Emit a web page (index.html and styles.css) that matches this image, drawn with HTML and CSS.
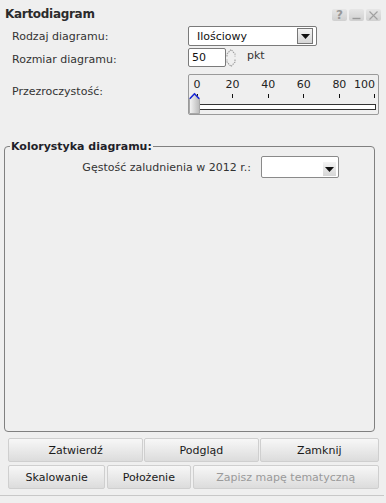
FILE: index.html
```html
<!DOCTYPE html>
<html lang="pl">
<head>
<meta charset="utf-8">
<link rel="stylesheet" href="styles.css">
</head>
<body>
<div class="panel">
  <div class="header">
    <div class="title">Kartodiagram</div>
    <div class="wbtns">
      <span class="wbtn q">?</span>
      <span class="wbtn">
        <svg width="9" height="9" viewBox="0 0 9 9"><path d="M0.5 7.5H8.5" stroke="#9a9a9a" stroke-width="1.4" fill="none"/></svg>
      </span>
      <span class="wbtn">
        <svg width="9" height="9" viewBox="0 0 9 9"><path d="M0.5 0.5L8.5 8.5M8.5 0.5L0.5 8.5" stroke="#a0a0a0" stroke-width="1.1" fill="none"/></svg>
      </span>
    </div>
  </div>

  <div class="form">
    <div class="label r1">Rodzaj diagramu:</div>
    <div class="select big">
      <span class="sel-text">Ilościowy</span>
      <span class="arrow-box boxed"><svg width="9" height="5" viewBox="0 0 9 5"><path d="M0 0H9L4.5 5Z" fill="#111"/></svg></span>
    </div>

    <div class="label r2">Rozmiar diagramu:</div>
    <div class="numrow">
      <div class="num">50</div>
      <svg class="spin" width="10" height="20" viewBox="0 0 10 20"><path d="M1 6L5 1.5L9 6V8.5M9 11.5V14L5 18.5L1 14V11.5M1 8.5V6" stroke="#9c9c9c" stroke-width="1.1" stroke-dasharray="1.4 0.9" fill="none"/></svg>
      <span class="unit">pkt</span>
    </div>

    <div class="label r3">Przezroczystość:</div>
    <div class="slider">
      <div class="scale">
        <span class="mk"><b>0</b><i></i></span>
        <span class="mk"><b>20</b><i></i></span>
        <span class="mk"><b>40</b><i></i></span>
        <span class="mk"><b>60</b><i></i></span>
        <span class="mk"><b>80</b><i></i></span>
        <span class="mk last"><b>100</b><i></i></span>
      </div>
      <div class="track"></div>
      <svg class="thumb" width="11" height="22" viewBox="0 0 11 22">
        <defs>
          <linearGradient id="tg" x1="0" y1="0" x2="1" y2="0">
            <stop offset="0" stop-color="#f6f6f6"/>
            <stop offset="1" stop-color="#b9b9b9"/>
          </linearGradient>
        </defs>
        <path d="M0.5 6.5L5.5 1.2L10.5 6.5V21.5H0.5Z" fill="url(#tg)" stroke="#a8a8a8" stroke-width="1"/>
        <path d="M0.8 6.8L5.5 1.8L10.2 6.8" stroke="#1a28d8" stroke-width="1.6" fill="none"/>
      </svg>
    </div>
  </div>

  <fieldset class="colors">
    <legend>Kolorystyka diagramu:</legend>
    <div class="crow">
      <span class="clabel">Gęstość zaludnienia w 2012 r.:</span>
      <div class="select small">
        <span class="sel-text"></span>
        <span class="arrow-box"><svg width="9" height="5" viewBox="0 0 9 5"><path d="M0 0H9L4.5 5Z" fill="#111"/></svg></span>
      </div>
    </div>
  </fieldset>

  <div class="brow row1">
    <button class="btn">Zatwierdź</button>
    <button class="btn">Podgląd</button>
    <button class="btn">Zamknij</button>
  </div>
  <div class="brow row2">
    <button class="btn">Skalowanie</button>
    <button class="btn">Położenie</button>
    <button class="btn disabled">Zapisz mapę tematyczną</button>
  </div>
  <div class="bottomline"></div>
</div>
</body>
</html>
```

FILE: styles.css
```css
html, body {
  margin: 0;
  padding: 0;
  background: #efefef;
}
body {
  width: 386px;
  height: 503px;
  overflow: hidden;
  font-family: "DejaVu Sans", Verdana, sans-serif;
  font-size: 11px;
  color: #333;
}
.panel {
  height: 503px;
}
.header {
  display: flex;
  justify-content: space-between;
  align-items: flex-start;
  height: 26px;
}
.title {
  font-weight: bold;
  font-size: 12px;
  letter-spacing: -0.3px;
  color: #2b2b2b;
  padding: 7px 0 0 5px;
}
.wbtns {
  display: flex;
  gap: 2px;
  padding: 9px 5px 0 0;
}
.wbtn {
  width: 15px;
  height: 12px;
  background: linear-gradient(#e6e6e6, #d0d0d0);
  border-radius: 2px;
  display: flex;
  align-items: center;
  justify-content: center;
}
.wbtn.q {
  color: #999;
  font-weight: bold;
  font-size: 12px;
  line-height: 12px;
}

.form {
  display: grid;
  grid-template-columns: 176px 191px;
  grid-template-rows: 20px 19px 41px;
  row-gap: 2px;
  padding-left: 12px;
}
.label {
  display: flex;
  align-items: center;
}
.form .label.r2 { padding-top: 3px; }
.form .label.r3 { margin-top: 5px; padding-bottom: 2px; }

.select {
  background: #fff;
  border: 1px solid #7a7a7a;
  border-radius: 2px;
  display: flex;
  align-items: center;
  justify-content: space-between;
  box-sizing: border-box;
}
.select.big {
  width: 129px;
  height: 20px;
  padding: 0 3px 0 8px;
  color: #111;
}
.arrow-box {
  width: 14px;
  height: 14px;
  background: linear-gradient(#f4f4f4, #d6d6d6);
  display: flex;
  align-items: center;
  justify-content: center;
  box-sizing: border-box;
}
.arrow-box.boxed {
  width: 16px;
  height: 16px;
  border: 1px solid #777;
}

.numrow {
  display: flex;
  align-items: center;
}
.num {
  width: 38px;
  height: 19px;
  box-sizing: border-box;
  background: #fff;
  border: 1px solid #7a7a7a;
  border-radius: 2px;
  padding-left: 3px;
  color: #111;
  display: flex;
  align-items: center;
}
.spin {
  display: block;
  margin-top: 1px;
}
.unit {
  margin-left: 11px;
  margin-top: -4px;
}

.slider {
  position: relative;
  margin-top: 5px;
  width: 191px;
  height: 41px;
  box-sizing: border-box;
  border: 1px solid #9a9a9a;
  border-radius: 2px;
}
.scale {
  display: flex;
  justify-content: space-between;
  padding: 4px 3px 0 8px;
}
.mk {
  display: flex;
  flex-direction: column;
  align-items: center;
  width: 0;
}
.mk.last {
  align-items: flex-end;
}
.mk b {
  font-weight: normal;
  color: #222;
  line-height: 12px;
  white-space: nowrap;
}
.mk i {
  display: block;
  width: 1px;
  height: 4px;
  margin-top: 3px;
  background: #111;
}
.track {
  margin: 6px 2px 0 6px;
  height: 6px;
  box-sizing: border-box;
  background: #fff;
  border: 1px solid #333;
}
.thumb {
  position: absolute;
  left: 0;
  top: 17px;
  display: block;
}

.colors {
  margin: 31px 0 0 4px;
  width: 371px;
  height: 291px;
  box-sizing: border-box;
  border: 1px solid #808080;
  border-radius: 4px;
  padding: 0;
}
.colors legend {
  font-weight: bold;
  color: #1f1f2a;
  padding: 0 1px;
  margin-left: 5px;
  line-height: 11px;
}
.crow {
  display: flex;
  align-items: center;
  justify-content: flex-end;
  width: 334px;
  margin-top: 4px;
}
.clabel {
  margin-right: 10px;
}
.select.small {
  width: 78px;
  height: 22px;
  border-color: #8a8a8a;
  padding: 0 2px;
}
.select.small .arrow-box {
  width: 13px;
  height: 14px;
  margin-top: 4px;
}

.brow {
  display: flex;
  gap: 1px;
  padding: 0 7px 0 8px;
}
.row1 { margin-top: 6px; }
.row2 { margin-top: 3px; }
.btn {
  font-family: "DejaVu Sans", Verdana, sans-serif;
  font-size: 11px;
  color: #1a1a1a;
  height: 24px;
  border: 1px solid #cfcfcf;
  border-radius: 2px;
  background: linear-gradient(#f7f7f7, #dcdcdc);
  padding: 0;
  margin: 0;
}
.row1 .btn:nth-child(1) { width: 136px; }
.row1 .btn:nth-child(2) { width: 115px; }
.row1 .btn:nth-child(3) { width: 120px; }
.row2 .btn:nth-child(1) { width: 98px; }
.row2 .btn:nth-child(2) { width: 84px; margin-left: 1px; }
.row2 .btn:nth-child(3) { width: 188px; margin-left: 1px; }
.btn.disabled { color: #9a9a9a; }
.bottomline {
  margin-top: 6px;
  height: 1px;
  width: 384px;
  background: #c8c8c8;
}
```
